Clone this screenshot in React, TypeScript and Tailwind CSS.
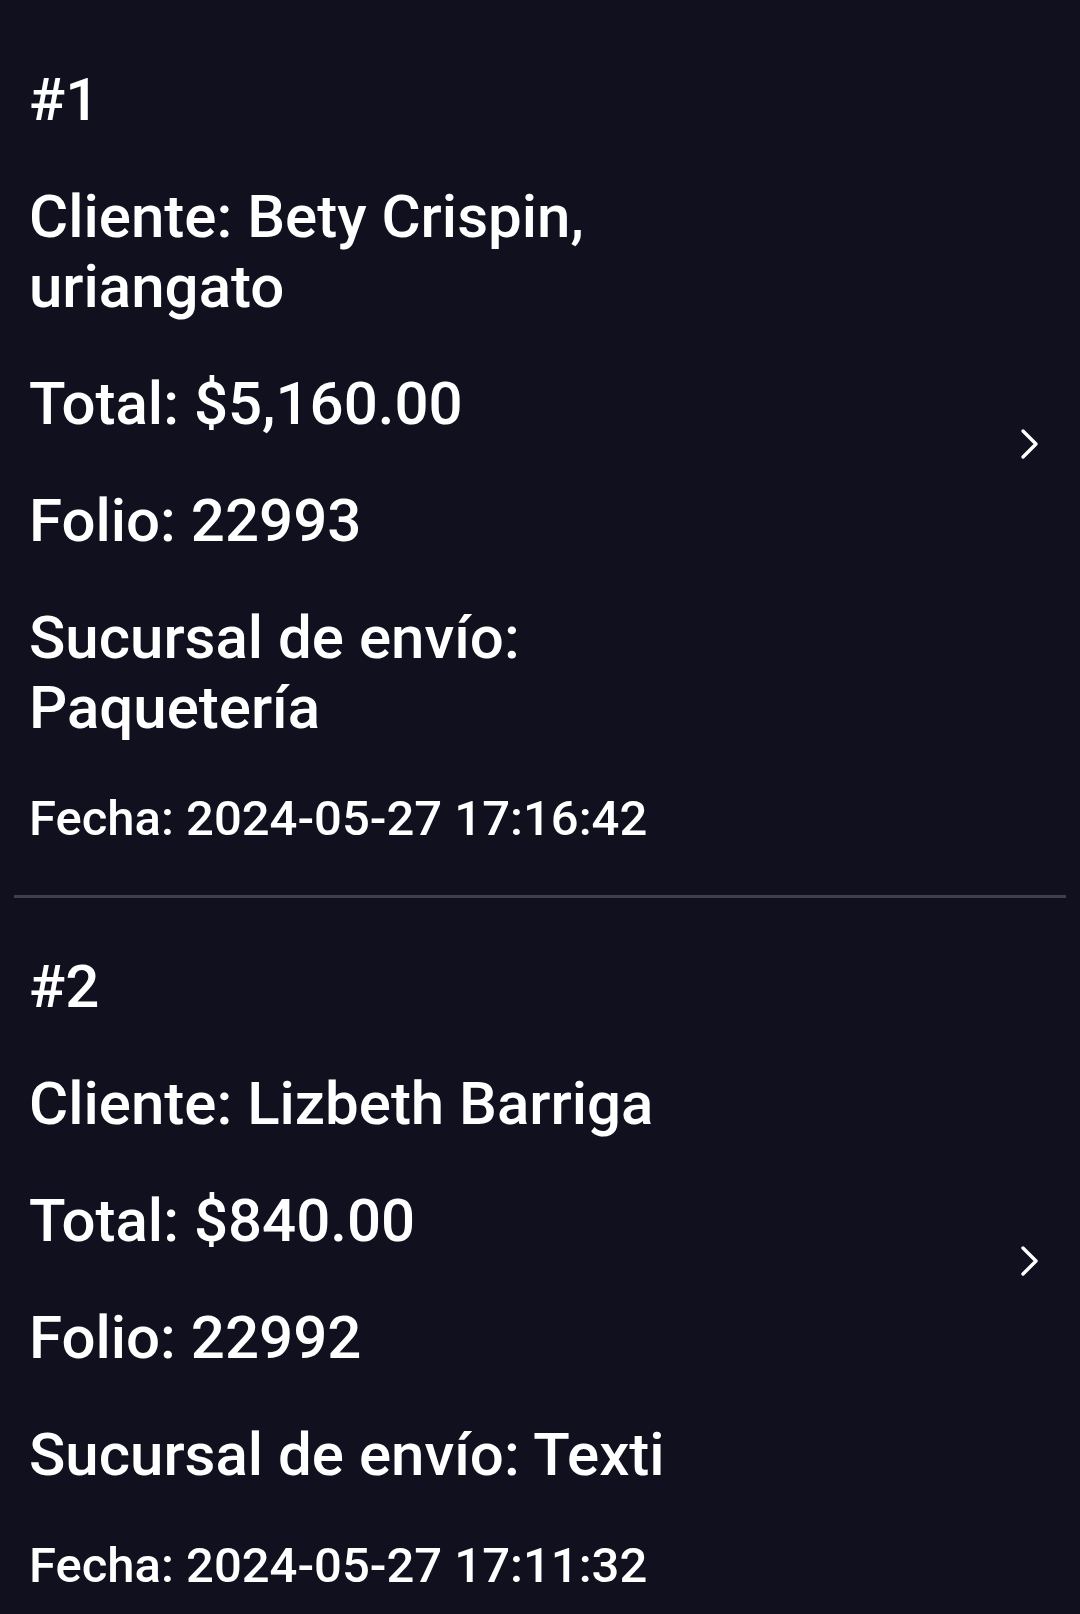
const orders = [
  {
    id: 1,
    cliente: "Bety Crispin, uriangato",
    total: "$5,160.00",
    folio: "22993",
    sucursal: "Paquetería",
    fecha: "2024-05-27 17:16:42",
  },
  {
    id: 2,
    cliente: "Lizbeth Barriga",
    total: "$840.00",
    folio: "22992",
    sucursal: "Texti",
    fecha: "2024-05-27 17:11:32",
  },
];

function Chevron() {
  return (
    <svg width="20" height="32" viewBox="0 0 20 32" fill="none" className="shrink-0 -mt-[24px]">
      <path d="M3 3 L16 16 L3 29" stroke="white" strokeWidth="3.4" strokeLinecap="round" strokeLinejoin="round" />
    </svg>
  );
}

export default function App() {
  const lineClass = "text-[60px] leading-[70px] font-medium text-white";

  return (
    <main className="min-h-screen bg-[#10101f] pt-[11px] font-['Roboto',sans-serif] overflow-hidden">
      {orders.map((order, i) => (
        <div key={order.id}>
          {i > 0 && <div className="mx-[14px] h-[3px] bg-[#3e3e4e]" />}
          <div className="flex items-center pl-[29px] pr-[40px] pt-[54px] pb-[48px]">
            <div className="flex-1">
              <div className="flex flex-col gap-[47px] max-w-[720px]">
                <p className={lineClass}>#{order.id}</p>
                <p className={lineClass}>Cliente: {order.cliente}</p>
                <p className={lineClass}>Total: {order.total}</p>
                <p className={lineClass}>Folio: {order.folio}</p>
                <p className={lineClass}>Sucursal de envío: {order.sucursal}</p>
                <p className="text-[49px] leading-[57px] font-medium text-white">Fecha: {order.fecha}</p>
              </div>
            </div>
            <Chevron />
          </div>
        </div>
      ))}
    </main>
  );
}
